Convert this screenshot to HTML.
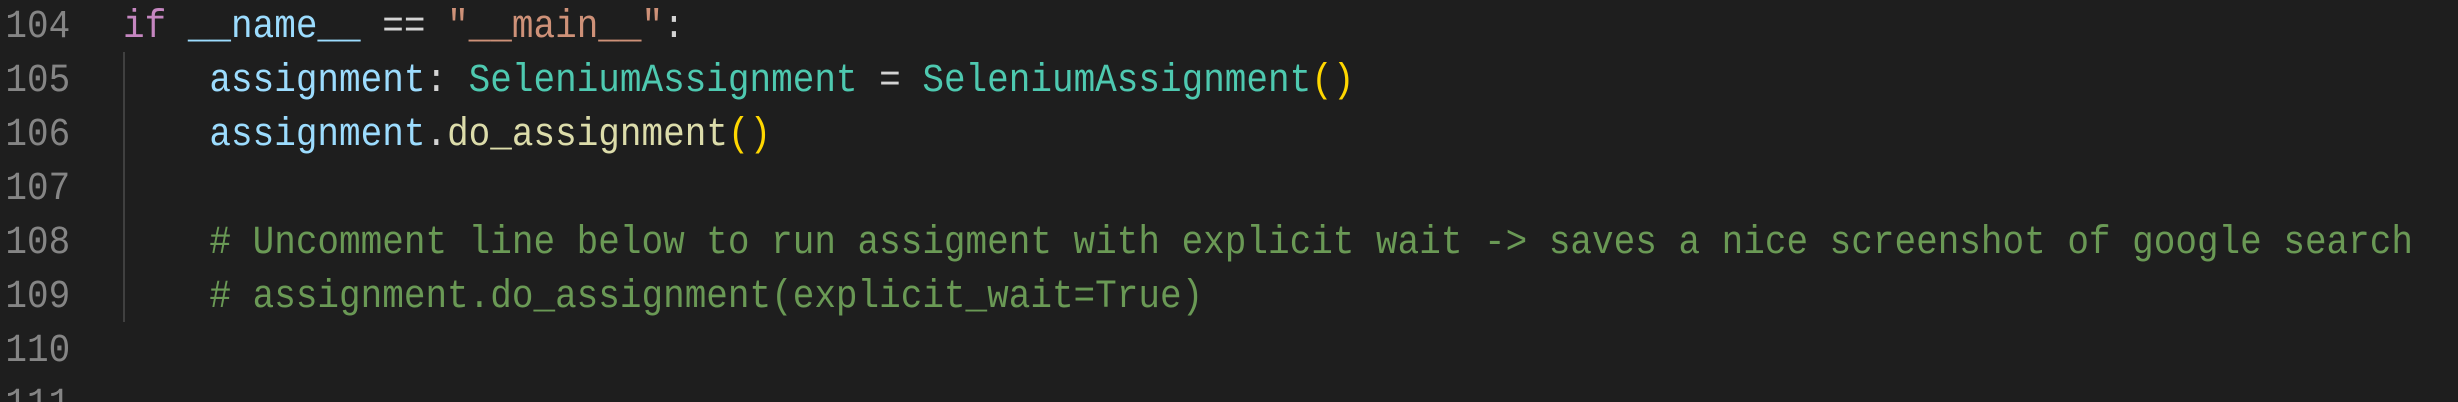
<!DOCTYPE html>
<html><head><style>
html,body{margin:0;width:2458px;height:402px;background:#1e1e1e;overflow:hidden}
.w{position:relative;width:2458px;height:402px;overflow:hidden;background:#1e1e1e}
.c{position:absolute;left:0;top:1px;font-family:"Liberation Mono",monospace;font-size:40px;line-height:54px;white-space:pre;color:#d4d4d4}
.ln{position:absolute;left:0;width:78px;text-align:right;color:#858585;transform:scaleX(0.9);transform-origin:0 0}
.code{position:absolute;left:123px;transform:scaleX(0.9);transform-origin:0 0}
.k{color:#c586c0}.v{color:#9cdcfe}.s{color:#ce9178}.t{color:#4ec9b0}.f{color:#dcdcaa}.p{color:#ffd700}.m{color:#6a9955}
.g{position:absolute;left:123px;top:52px;width:2px;height:270px;background:#404040}
</style></head><body><div class="w">
<div class="g"></div>
<div class="c"><div class="ln">104
105
106
107
108
109
110
111</div><div class="code"><span class="k">if</span> <span class="v">__name__</span> == <span class="s">"__main__"</span>:
    <span class="v">assignment</span>: <span class="t">SeleniumAssignment</span> = <span class="t">SeleniumAssignment</span><span class="p">()</span>
    <span class="v">assignment</span>.<span class="f">do_assignment</span><span class="p">()</span>

    <span class="m"># Uncomment line below to run assigment with explicit wait -&gt; saves a nice screenshot of google search</span>
    <span class="m"># assignment.do_assignment(explicit_wait=True)</span></div></div>
</div></body></html>
